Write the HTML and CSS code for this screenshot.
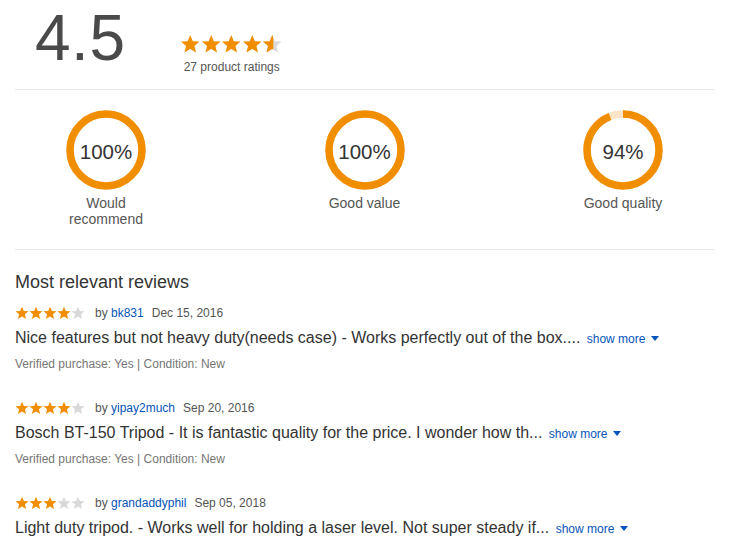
FILE: index.html
```html
<!DOCTYPE html>
<html>
<head>
<meta charset="utf-8">
<link rel="stylesheet" href="styles.css">
</head>
<body>
<svg width="0" height="0" class="defs">
  <defs>
    <symbol id="star" viewBox="0 0 20 20">
      <polygon points="10,1 12.6,7.2 19.3,7.6 14.2,11.9 15.8,18.5 10,14.9 4.2,18.5 5.8,11.9 0.7,7.6 7.4,7.2"/>
    </symbol>
    <clipPath id="halfclip"><rect x="0" y="0" width="11" height="20"/></clipPath>
  </defs>
</svg>
<div class="page">
  <section class="summary">
    <div class="score">4.5</div>
    <div class="score-meta">
      <div class="stars big">
        <svg class="on"><use href="#star"/></svg>
        <svg class="on"><use href="#star"/></svg>
        <svg class="on"><use href="#star"/></svg>
        <svg class="on"><use href="#star"/></svg>
        <svg viewBox="0 0 20 20" class="half"><use href="#star" class="off-fill"/><use href="#star" class="on-fill" clip-path="url(#halfclip)"/></svg>
      </div>
      <div class="count">27 product ratings</div>
    </div>
  </section>

  <section class="aspects">
    <div class="aspect">
      <div class="ring">
        <svg viewBox="0 0 80 80"><circle cx="40" cy="40" r="36" class="track"/><circle cx="40" cy="40" r="36" class="arc" stroke-dasharray="226.2 226.2"/></svg>
        <span class="pct">100%</span>
      </div>
      <div class="aspect-label">Would<br>recommend</div>
    </div>
    <div class="aspect">
      <div class="ring">
        <svg viewBox="0 0 80 80"><circle cx="40" cy="40" r="36" class="track"/><circle cx="40" cy="40" r="36" class="arc" stroke-dasharray="226.2 226.2"/></svg>
        <span class="pct">100%</span>
      </div>
      <div class="aspect-label">Good value</div>
    </div>
    <div class="aspect">
      <div class="ring">
        <svg viewBox="0 0 80 80"><circle cx="40" cy="40" r="36" class="track"/><circle cx="40" cy="40" r="36" class="arc" stroke-dasharray="212.6 226.2"/></svg>
        <span class="pct">94%</span>
      </div>
      <div class="aspect-label">Good quality</div>
    </div>
  </section>

  <section class="reviews">
    <h2>Most relevant reviews</h2>

    <article class="review">
      <div class="meta">
        <div class="stars small">
          <svg class="on"><use href="#star"/></svg><svg class="on"><use href="#star"/></svg><svg class="on"><use href="#star"/></svg><svg class="on"><use href="#star"/></svg><svg class="off"><use href="#star"/></svg>
        </div>
        <span class="by">by <a class="user">bk831</a></span>
        <span class="date">Dec 15, 2016</span>
      </div>
      <p class="title">Nice features but not heavy duty(needs case) - Works perfectly out of the box.... <a class="more">show more <span class="caret"></span></a></p>
      <p class="verified">Verified purchase: Yes | Condition: New</p>
    </article>

    <article class="review">
      <div class="meta">
        <div class="stars small">
          <svg class="on"><use href="#star"/></svg><svg class="on"><use href="#star"/></svg><svg class="on"><use href="#star"/></svg><svg class="on"><use href="#star"/></svg><svg class="off"><use href="#star"/></svg>
        </div>
        <span class="by">by <a class="user">yipay2much</a></span>
        <span class="date">Sep 20, 2016</span>
      </div>
      <p class="title">Bosch BT-150 Tripod - It is fantastic quality for the price. I wonder how th... <a class="more">show more <span class="caret"></span></a></p>
      <p class="verified">Verified purchase: Yes | Condition: New</p>
    </article>

    <article class="review">
      <div class="meta">
        <div class="stars small">
          <svg class="on"><use href="#star"/></svg><svg class="on"><use href="#star"/></svg><svg class="on"><use href="#star"/></svg><svg class="off"><use href="#star"/></svg><svg class="off"><use href="#star"/></svg>
        </div>
        <span class="by">by <a class="user">grandaddyphil</a></span>
        <span class="date">Sep 05, 2018</span>
      </div>
      <p class="title">Light duty tripod. - Works well for holding a laser level. Not super steady if... <a class="more">show more <span class="caret"></span></a></p>
    </article>
  </section>
</div>
</body>
</html>
```

FILE: styles.css
```css
* { box-sizing: border-box; }
html, body { margin: 0; padding: 0; background: #fff; }
body {
  font-family: "Liberation Sans", Arial, sans-serif;
  color: #555;
  overflow: hidden;
}
.defs { position: absolute; width: 0; height: 0; }
.page { width: 699px; margin-left: 15px; }

.summary {
  display: flex;
  align-items: flex-start;
  height: 90px;
  border-bottom: 1px solid #e6e6e6;
  padding-top: 6px;
}
.score {
  font-size: 64px;
  line-height: 64px;
  color: #4a4a4a;
  margin-left: 20px;
  letter-spacing: 0.5px;
}
.score-meta {
  margin-left: 55px;
  margin-top: 28px;
  display: flex;
  flex-direction: column;
  align-items: center;
}
.stars { display: flex; }
.stars svg { fill: #f18e00; }
.stars svg.off { fill: #d9d9d9; }
.stars .off-fill { fill: #d9d9d9; }
.stars .on-fill { fill: #f18e00; }
.stars.big svg { width: 20.5px; height: 20px; }
.count { font-size: 12px; line-height: 14px; margin-top: 6px; color: #555; }

.aspects {
  display: flex;
  justify-content: space-between;
  align-items: flex-start;
  padding-top: 20px;
  height: 160px;
  border-bottom: 1px solid #e6e6e6;
}
.aspect {
  width: 182px;
  display: flex;
  flex-direction: column;
  align-items: center;
}
.ring { position: relative; width: 80px; height: 80px; }
.ring svg { width: 80px; height: 80px; transform: rotate(-90deg); }
.ring circle { fill: none; stroke-width: 7.5; }
.ring .track { stroke: #fce5c7; }
.ring .arc { stroke: #f18e00; }
.pct {
  position: absolute;
  left: 0; right: 0; top: 2px;
  line-height: 80px;
  text-align: center;
  font-size: 20.5px;
  color: #333;
}
.aspect-label {
  margin-top: 5px;
  font-size: 14px;
  line-height: 16px;
  text-align: center;
  color: #555;
}

.reviews h2 {
  margin: 22px 0 0;
  font-size: 18px;
  line-height: 20px;
  font-weight: normal;
  color: #333;
}
.review { margin-top: 13px; }
.review + .review { margin-top: 29px; }
.meta {
  display: flex;
  align-items: center;
  height: 16px;
  font-size: 12px;
  color: #555;
}
.stars.small svg { width: 14px; height: 14px; }
.by { margin-left: 10px; }
.user { color: #0654ba; text-decoration: none; }
.date { margin-left: 8px; }
.title {
  margin: 7px 0 0;
  font-size: 16px;
  line-height: 20px;
  color: #333;
  white-space: nowrap;
}
.more {
  font-size: 12px;
  color: #0654ba;
  margin-left: 2px;
}
.caret {
  display: inline-block;
  width: 0; height: 0;
  border-left: 4px solid transparent;
  border-right: 4px solid transparent;
  border-top: 5px solid #0654ba;
  vertical-align: 2px;
  margin-left: 2px;
}
.verified {
  margin: 8px 0 0;
  font-size: 12px;
  line-height: 14px;
  color: #767676;
}
```
